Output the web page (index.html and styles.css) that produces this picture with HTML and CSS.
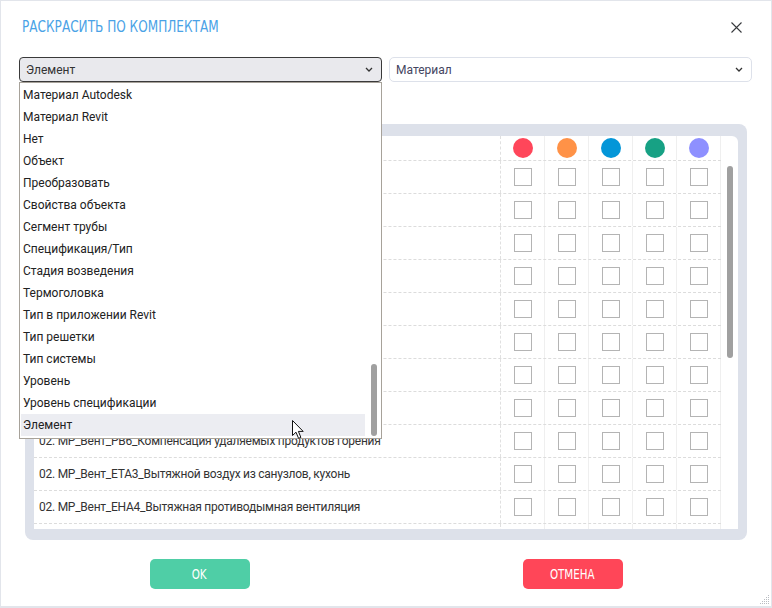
FILE: index.html
```html
<!DOCTYPE html>
<html lang="ru">
<head>
    <meta charset="UTF-8">
    <meta name="viewport" content="width=device-width, initial-scale=1.0">
    <title>Раскрасить по комплектам</title>
    <link rel="stylesheet" href="styles.css">
</head>
<body>
    <div class="dialog">
        <div class="dialog-head">
            <h1 class="dialog-title">РАСКРАСИТЬ ПО КОМПЛЕКТАМ</h1>
            <button class="close-btn" type="button">
                <svg width="11" height="11" viewBox="0 0 11 11"><path d="M0.5 0.5 L10.5 10.5 M10.5 0.5 L0.5 10.5" stroke="#37393d" stroke-width="1.1" fill="none"/></svg>
            </button>
        </div>

        <div class="filters">
            <div class="select select-open">
                <span>Элемент</span>
                <svg width="8" height="5" viewBox="0 0 8 5"><path d="M1 1 L4 4 L7 1" stroke="#333" stroke-width="1.3" fill="none"/></svg>
            </div>
            <div class="select">
                <span class="select-muted">Материал</span>
                <svg width="8" height="5" viewBox="0 0 8 5"><path d="M1 1 L4 4 L7 1" stroke="#333" stroke-width="1.3" fill="none"/></svg>
            </div>
        </div>

        <div class="table-frame">
            <div class="table-inner">
                <div class="table-body">
                    <div class="row row-head">
                        <div class="cell-name"></div>
                        <div class="cell-check"><span class="dot dot-red"></span></div>
                        <div class="cell-check"><span class="dot dot-orange"></span></div>
                        <div class="cell-check"><span class="dot dot-blue"></span></div>
                        <div class="cell-check"><span class="dot dot-green"></span></div>
                        <div class="cell-check"><span class="dot dot-violet"></span></div>
                    </div>
                    <div id="rows"></div>
                </div>
                <div class="scroll-track"><div class="scroll-thumb"></div></div>
            </div>
        </div>

        <div class="actions">
            <button class="btn btn-ok" type="button"><span>OK</span></button>
            <button class="btn btn-cancel" type="button"><span>ОТМЕНА</span></button>
        </div>

        <!-- open list of the first select -->
        <div class="dropdown">
            <ul class="dropdown-list">
                <li>Материал Autodesk</li>
                <li>Материал Revit</li>
                <li>Нет</li>
                <li>Объект</li>
                <li>Преобразовать</li>
                <li>Свойства объекта</li>
                <li>Сегмент трубы</li>
                <li>Спецификация/Тип</li>
                <li>Стадия возведения</li>
                <li>Термоголовка</li>
                <li>Тип в приложении Revit</li>
                <li>Тип решетки</li>
                <li>Тип системы</li>
                <li>Уровень</li>
                <li>Уровень спецификации</li>
                <li class="hover">Элемент</li>
            </ul>
            <div class="dropdown-thumb"></div>
        </div>

        <svg class="cursor" width="13" height="20" viewBox="0 0 13 20">
            <path d="M0.5 0.5 L0.5 15.5 L4 12.2 L6.6 18.4 L8.9 17.4 L6.4 11.4 L11.2 11.4 Z" fill="#fff" stroke="#111" stroke-width="1" stroke-linejoin="round"/>
        </svg>

        <svg class="grip" width="10" height="10" viewBox="0 0 10 10" fill="#b9bcc2">
            <rect x="8" y="0" width="1" height="1"/>
            <rect x="6" y="2" width="1" height="1"/><rect x="8" y="2" width="1" height="1"/>
            <rect x="4" y="4" width="1" height="1"/><rect x="6" y="4" width="1" height="1"/><rect x="8" y="4" width="1" height="1"/>
            <rect x="2" y="6" width="1" height="1"/><rect x="4" y="6" width="1" height="1"/><rect x="6" y="6" width="1" height="1"/><rect x="8" y="6" width="1" height="1"/>
            <rect x="0" y="8" width="1" height="1"/><rect x="2" y="8" width="1" height="1"/><rect x="4" y="8" width="1" height="1"/><rect x="6" y="8" width="1" height="1"/><rect x="8" y="8" width="1" height="1"/>
        </svg>
    </div>

    <script>
        const names = [
            '01. MP_ОВ_Отопление',
            '01. MP_ОВ_Теплоснабжение',
            '01. MP_ОВ_Трубопроводы',
            '02. MP_Вент_SA1_Приток',
            '02. MP_Вент_EA1_Вытяжка',
            '02. MP_Вент_SA2_Приток',
            '02. MP_Вент_EA2_Вытяжка',
            '02. MP_Вент_PB5_Подпор',
            '02. MP_Вент_PB6_Компенсация удаляемых продуктов горения',
            '02. MP_Вент_ETA3_Вытяжной воздух из санузлов, кухонь',
            '02. MP_Вент_EHA4_Вытяжная противодымная вентиляция',
            ''
        ];
        const rows = document.getElementById('rows');
        names.forEach(function(name) {
            const row = document.createElement('div');
            row.className = 'row';
            let html = '<div class="cell-name">' + name + '</div>';
            for (let i = 0; i < 5; i++) {
                html += '<div class="cell-check"><span class="checkbox"></span></div>';
            }
            row.innerHTML = html;
            rows.appendChild(row);
        });
    </script>
</body>
</html>
```

FILE: styles.css
```css
* {
    box-sizing: border-box;
}

body {
    margin: 0;
    font-family: Roboto, 'Liberation Sans', sans-serif;
    background-color: #fff;
}

.dialog {
    position: relative;
    width: 772px;
    height: 608px;
    border: 1px solid #e2e5eb;
    border-bottom-width: 2px;
    background-color: #fff;
    overflow: hidden;
}

.dialog-head {
    display: flex;
    justify-content: space-between;
    align-items: flex-start;
    height: 56px;
    padding: 16px 29px 0 21px;
}

.dialog-title {
    margin: 0;
    font-family: 'DejaVu Sans', sans-serif;
    font-stretch: condensed;
    font-weight: normal;
    font-size: 16px;
    line-height: 20px;
    color: #4aa2e6;
    transform: scaleX(0.84);
    transform-origin: left center;
}

.close-btn {
    border: none;
    background: none;
    padding: 0;
    margin-top: 5px;
    width: 11px;
    height: 11px;
    cursor: pointer;
}

.close-btn svg {
    display: block;
}

.filters {
    display: flex;
    gap: 7px;
    padding: 0 19px 0 18px;
}

.select {
    flex: 1;
    display: flex;
    align-items: center;
    justify-content: space-between;
    height: 25px;
    padding: 0 8px 0 6px;
    border: 1px solid #dde1ea;
    border-radius: 5px;
    font-size: 12px;
    color: #333;
}

.select-open {
    border-color: #3a3a3a;
    border-radius: 4px;
    background-color: #e9e9ed;
}

.select-muted {
    color: #45465f;
}

.table-frame {
    margin: 42px 24px 0 24px;
    padding: 12px 9px 11px 9px;
    background-color: #dde1ea;
    border-radius: 8px;
}

.table-inner {
    display: flex;
    height: 393px;
    background-color: #fff;
    border-radius: 0 6px 0 0;
    overflow: hidden;
}

.table-body {
    width: 687px;
}

.row {
    display: grid;
    grid-template-columns: 467px repeat(5, 44px);
    height: 33px;
    border-bottom: 1px dashed #dcdcdc;
}

.row-head {
    height: 25px;
}

.cell-name {
    display: flex;
    align-items: center;
    padding-left: 5px;
    border-right: 1px dashed #e0e0e0;
    font-size: 12px;
    letter-spacing: -0.25px;
    color: #333;
    white-space: nowrap;
    overflow: hidden;
}

.cell-check {
    display: flex;
    align-items: center;
    justify-content: center;
    border-right: 1px solid #efefef;
}

.checkbox {
    width: 18px;
    height: 18px;
    border: 1px solid #b4b4b4;
}

.dot {
    width: 20px;
    height: 20px;
    border-radius: 50%;
}

.dot-red { background-color: #ff465a; }
.dot-orange { background-color: #ff9247; }
.dot-blue { background-color: #0496d8; }
.dot-green { background-color: #17a184; }
.dot-violet { background-color: #8e90ff; }

.scroll-track {
    flex: 1;
    padding: 30px 0 0 6px;
}

.scroll-thumb {
    width: 6px;
    height: 192px;
    border-radius: 3px;
    background-color: #a0a0a0;
}

.actions {
    display: flex;
    justify-content: center;
    gap: 273px;
    margin-top: 19px;
}

.btn {
    width: 100px;
    height: 30px;
    border: none;
    border-radius: 5px;
    font-family: 'DejaVu Sans', sans-serif;
    font-stretch: condensed;
    font-size: 14px;
    color: #fff;
    cursor: pointer;
}

.btn span {
    display: inline-block;
    transform: scaleX(0.82);
}

.btn-ok {
    background-color: #4fcea6;
}

.btn-cancel {
    background-color: #ff4658;
}

.dropdown {
    position: absolute;
    left: 18px;
    top: 81px;
    width: 363px;
    height: 357px;
    border: 1px solid #a7a29a;
    background-color: #fff;
}

.dropdown-list {
    list-style: none;
    margin: 0;
    padding: 1px 0 0 1px;
    width: 345px;
}

.dropdown-list li {
    height: 22px;
    line-height: 22px;
    padding-left: 2px;
    font-size: 12px;
    color: #222;
}

.dropdown-list li.hover {
    background-color: #ecedf2;
}

.dropdown-thumb {
    position: absolute;
    left: 351px;
    top: 281px;
    width: 6px;
    height: 72px;
    border-radius: 3px;
    background-color: #a0a0a0;
}

.cursor {
    position: absolute;
    left: 291px;
    top: 419px;
}

.grip {
    position: absolute;
    right: 1px;
    bottom: 1px;
}
```
